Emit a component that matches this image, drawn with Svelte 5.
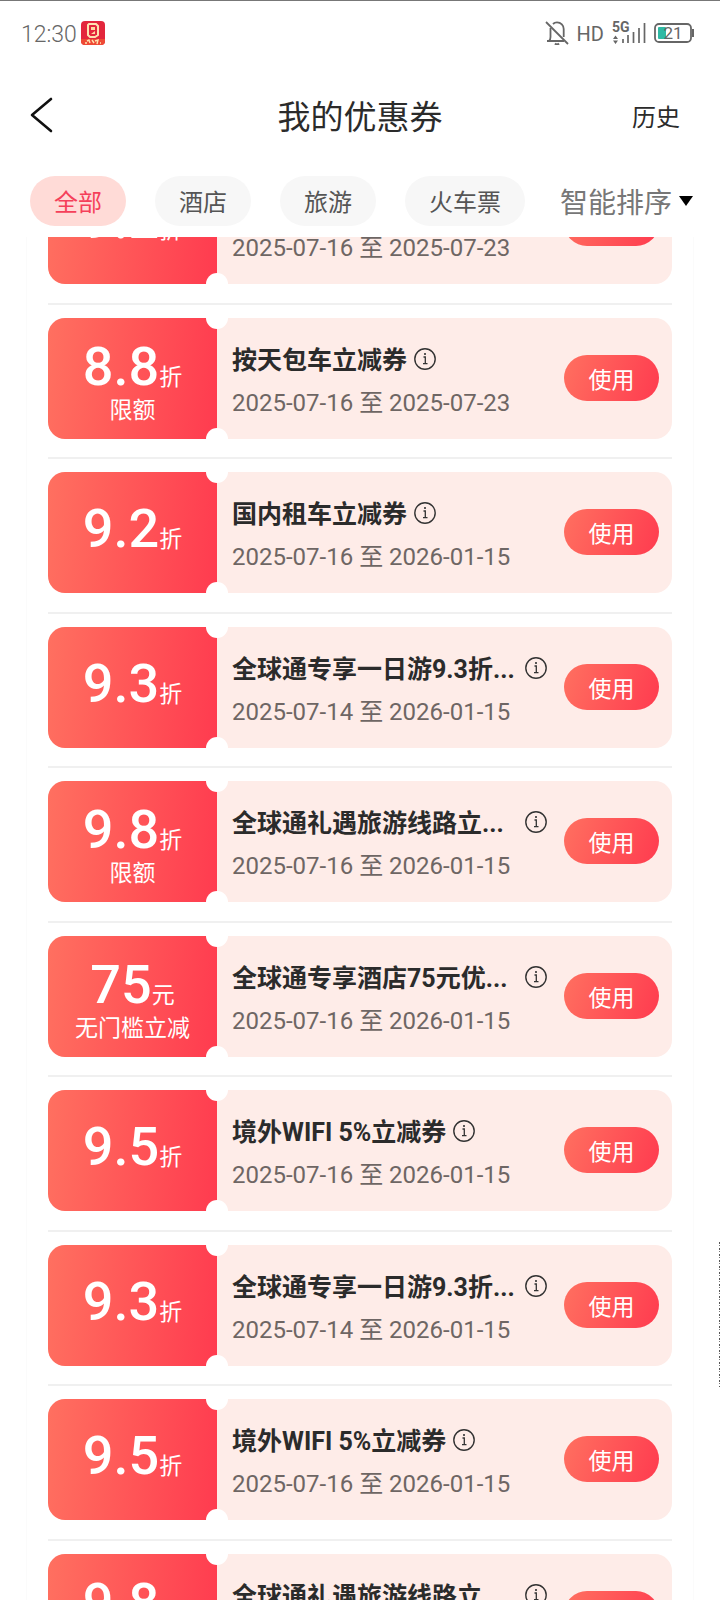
<script>
    import { onMount } from "svelte";

    const filters = ["全部", "酒店", "旅游", "火车票"];

    const sortOptions = ["智能排序"];

    const coupons = [
        { id: 1, amount: "9.2", unit: "折", title: "", start: "2025-07-16", end: "2025-07-23" },
        { id: 2, amount: "8.8", unit: "折", limit: "限额", title: "按天包车立减券", start: "2025-07-16", end: "2025-07-23" },
        { id: 3, amount: "9.2", unit: "折", title: "国内租车立减券", start: "2025-07-16", end: "2026-01-15" },
        { id: 4, amount: "9.3", unit: "折", title: "全球通专享一日游9.3折...", long: true, start: "2025-07-14", end: "2026-01-15" },
        { id: 5, amount: "9.8", unit: "折", limit: "限额", title: "全球通礼遇旅游线路立...", long: true, start: "2025-07-16", end: "2026-01-15" },
        { id: 6, amount: "75", unit: "元", limit: "无门槛立减", title: "全球通专享酒店75元优...", long: true, start: "2025-07-16", end: "2026-01-15" },
        { id: 7, amount: "9.5", unit: "折", title: "境外WIFI 5%立减券", start: "2025-07-16", end: "2026-01-15" },
        { id: 8, amount: "9.3", unit: "折", title: "全球通专享一日游9.3折...", long: true, start: "2025-07-14", end: "2026-01-15" },
        { id: 9, amount: "9.5", unit: "折", title: "境外WIFI 5%立减券", start: "2025-07-16", end: "2026-01-15" },
        { id: 10, amount: "9.8", unit: "折", limit: "限额", title: "全球通礼遇旅游线路立...", long: true, start: "2025-07-16", end: "2026-01-15" },
    ];

    let activeFilter = $state("全部");
    let sort = $state("智能排序");
    let list;

    // The list opens scrolled part of the way past the first coupon
    onMount(() => {
        list.scrollTop = 87;
    });
</script>

<div class="page">
    <div class="status">
        <span class="time">12:30</span>
        <svg class="app-icon" width="24" height="24" viewBox="0 0 24 24" aria-hidden="true">
            <rect width="24" height="24" rx="4" fill="#e3263c" />
            <path d="M0 18h24v2a4 4 0 0 1-4 4H4a4 4 0 0 1-4-4z" fill="#ee4a35" />
            <path d="M8 3h7l2 2v9l-3 2H9l-2-2V4z" fill="none" stroke="#ffe2b0" stroke-width="2" />
            <path d="M10 6h4v3h-4zM10 13l4-3v3z" fill="#ffd9a0" />
            <path d="M6 20l2-1 1 3M11 19l2 3M14 20l3-1-1 4M4 22h2M19 22h1" stroke="#ffe2b0" stroke-width="1.4" fill="none" />
        </svg>
        <div class="signals">
            <svg width="24" height="24" viewBox="0 0 24 24" fill="none" stroke="#666" stroke-width="1.8" aria-hidden="true">
                <path d="M1 1l22 22" />
                <path d="M2 20h17M4 20c1-1 1.500-2 1.500-4V7M8 3c1-1 2.500-1.600 4-1.600 4 0 6.700 3 6.700 6.600v8" />
                <path d="M10 22.500c1 1 3 1 4 0" stroke-width="2" />
            </svg>
            <span class="hd">HD</span>
            <div class="network">
                <span class="generation">5G</span>
                <svg width="34" height="24" viewBox="0 0 34 24" aria-hidden="true">
                    <path d="M1 18l2.500-3.500L6 18zM1 19.500h5L3.500 23z" fill="#666" />
                    <path d="M11 18v4M16 14v8M21.500 11v11M27 7v15M32.500 2v20" stroke="#666" stroke-width="1.700" />
                </svg>
            </div>
            <div class="battery">
                <svg width="40" height="20" viewBox="0 0 40 20" aria-hidden="true">
                    <rect x="1" y="1" width="36" height="18" rx="4" fill="none" stroke="#666" stroke-width="1.800" />
                    <path d="M39 6v8" stroke="#666" stroke-width="2" />
                    <rect x="4" y="4" width="8" height="12" rx="1" fill="#2fb9a4" />
                </svg>
                <span>21</span>
            </div>
        </div>
    </div>

    <header>
        <button class="back" aria-label="返回">
            <svg width="24" height="36" viewBox="0 0 24 36" aria-hidden="true">
                <path d="M21 2L2 18l19 16" fill="none" stroke="#111" stroke-width="2.600" stroke-linecap="round" stroke-linejoin="round" />
            </svg>
        </button>
        <h1>我的优惠券</h1>
        <a href="#history">历史</a>
    </header>

    <nav>
        {#each filters as filter}
            <button class="filter" class:active={filter === activeFilter} onclick={() => (activeFilter = filter)}>{filter}</button>
        {/each}
        <label class="sort">
            <select bind:value={sort} aria-label="排序">
                {#each sortOptions as option}
                    <option>{option}</option>
                {/each}
            </select>
            <svg width="14" height="10" viewBox="0 0 14 10" aria-hidden="true"><path d="M0 0h14L7 10z" fill="#000" /></svg>
        </label>
    </nav>

    <main bind:this={list}>
        <ul>
            {#each coupons as coupon (coupon.id)}
                <li>
                    <article class="coupon">
                        <div class="value">
                            <p class="amount"><strong>{coupon.amount}</strong>{coupon.unit}</p>
                            {#if coupon.limit}
                                <p class="limit">{coupon.limit}</p>
                            {/if}
                        </div>
                        <div class="info">
                            <div class="title">
                                <h2 class:long={coupon.long}>{coupon.title}</h2>
                                <svg width="22" height="22" viewBox="0 0 22 22" fill="none" stroke="#333" aria-hidden="true">
                                    <circle cx="11" cy="11" r="10.200" stroke-width="1.400" />
                                    <path d="M9.500 9h1.800v6.500M9 15.700h4.500" stroke-width="1.300" />
                                    <circle cx="11" cy="6" r="1.100" fill="#333" stroke="none" />
                                </svg>
                            </div>
                            <p class="dates">{coupon.start} 至 {coupon.end}</p>
                        </div>
                        <button class="use">使用</button>
                    </article>
                </li>
            {/each}
        </ul>
    </main>
    <div class="edge"></div>
</div>

<style>
    :global(body) {
        margin: 0;
        background: #fff;
    }

    .page {
        display: flex;
        flex-direction: column;
        box-sizing: border-box;
        height: 100vh;
        border-top: 1px solid #777;
        font-family: Roboto, "Noto Sans CJK SC", sans-serif;
        color: #2b2b2b;
    }

    h1, h2, p, ul {
        margin: 0;
        padding: 0;
        font-weight: 400;
    }

    button, select {
        border: none;
        padding: 0;
        font-family: inherit;
        cursor: pointer;
    }

    /* Status bar */
    .status {
        display: flex;
        align-items: center;
        height: 64px;
        padding: 0 26px 0 21px;
        color: #666;
    }

    .time {
        padding-top: 2px;
        font-size: 23px;
        font-weight: 300;
    }

    .app-icon {
        margin-left: 4px;
    }

    .signals {
        display: flex;
        align-items: center;
        gap: 8px;
        margin-left: auto;
    }

    .hd {
        padding-top: 2px;
        font-size: 20px;
    }

    .network, .battery {
        position: relative;
        display: flex;
    }

    .generation {
        position: absolute;
        top: 0;
        left: 0;
        font-size: 14px;
        line-height: 12px;
        font-weight: 700;
    }

    .battery span {
        position: absolute;
        inset: 0 2px 0 0;
        text-align: center;
        font-size: 17px;
        line-height: 21px;
    }

    /* Title bar */
    header {
        display: grid;
        grid-template-columns: 1fr auto 1fr;
        align-items: center;
        height: 100px;
    }

    .back {
        justify-self: start;
        display: flex;
        margin-left: 30px;
        background: none;
    }

    h1 {
        padding-top: 6px;
        font-size: 33px;
        line-height: 48px;
    }

    header a {
        justify-self: end;
        margin-right: 40px;
        color: inherit;
        font-size: 24px;
        text-decoration: none;
    }

    /* Filters */
    nav {
        display: flex;
        align-items: center;
        gap: 29px;
        height: 72px;
        padding: 0 27px 0 30px;
    }

    .filter {
        height: 50px;
        padding: 0 24px 2px;
        border-radius: 25px;
        background: #f7f7f7;
        color: #555;
        font-size: 24px;
        white-space: nowrap;
    }

    .filter.active {
        background: #ffdbd7;
        color: #f5405a;
    }

    .sort {
        display: flex;
        align-items: center;
        gap: 6px;
        margin-left: auto;
    }

    select {
        appearance: none;
        padding-top: 4px;
        background: none;
        color: #777;
        font-size: 28px;
    }

    /* Coupons */
    main {
        flex: 1;
        min-height: 0;
        margin: 0 26px;
        padding: 0 21px;
        border: solid #fbfbfb;
        border-width: 0 1px;
        overflow-y: auto;
        scrollbar-width: none;
    }

    ul {
        list-style: none;
    }

    li {
        padding: 13px 0 18px;
        border-bottom: 2px solid #f0f0f0;
    }

    li:nth-child(odd) {
        padding-bottom: 19px;
    }

    .coupon {
        position: relative;
        display: flex;
        align-items: center;
        height: 121px;
        padding-right: 13px;
        border-radius: 17px;
        background: #feece8;
        overflow: hidden;
    }

    .coupon::before, .coupon::after {
        content: "";
        position: absolute;
        left: 158px;
        width: 22px;
        height: 22px;
        border-radius: 50%;
        background: #fff;
    }

    .coupon::before {
        top: -11px;
    }

    .coupon::after {
        bottom: -11px;
    }

    .value {
        display: flex;
        flex-direction: column;
        align-items: center;
        justify-content: center;
        flex: none;
        box-sizing: border-box;
        width: 169px;
        height: 100%;
        padding-top: 4px;
        background: linear-gradient(95deg, #ff7060, #ff3b4f);
        color: #fff;
        font-size: 23px;
    }

    .amount {
        line-height: 50px;
    }

    .amount strong {
        font-size: 54px;
        font-weight: 500;
    }

    .limit {
        line-height: 16px;
    }

    .info {
        flex: 1;
        min-width: 0;
        margin: 0 17px 0 15px;
        padding-top: 6px;
    }

    .title {
        display: flex;
        align-items: center;
        gap: 7px;
    }

    h2 {
        height: 34px;
        font-size: 25px;
        line-height: 34px;
        font-weight: 700;
        white-space: nowrap;
        overflow: hidden;
    }

    h2.long {
        flex: 1;
    }

    .title svg {
        flex: none;
        margin-bottom: 4px;
    }

    .dates {
        margin-top: 8px;
        color: #6e6664;
        font-size: 24px;
        line-height: 34px;
        white-space: nowrap;
    }

    .use {
        flex: none;
        width: 95px;
        height: 46px;
        margin-bottom: 2px;
        border-radius: 23px;
        background: linear-gradient(110deg, #ff7060, #ff3b4f);
        color: #fff;
        font-size: 23px;
    }

    /* Thin dotted mark on the right edge of the screen */
    .edge {
        position: fixed;
        right: 0;
        bottom: 213px;
        width: 1px;
        height: 145px;
        background: repeating-linear-gradient(#555 0 2px, #fff 2px 3px, #777 3px 4px, #fff 4px 6px);
    }
</style>
